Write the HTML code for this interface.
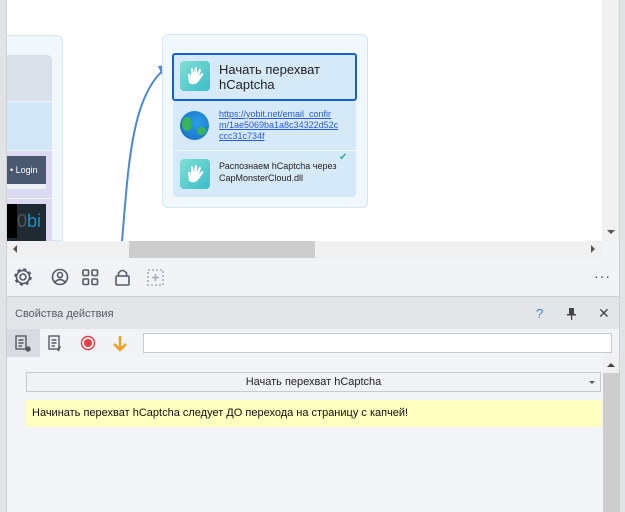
<!DOCTYPE html>
<html><head><meta charset="utf-8"><style>
*{margin:0;padding:0;box-sizing:border-box}
body{width:625px;height:512px;overflow:hidden;position:relative;background:#f2f3f7;font-family:"Liberation Sans","DejaVu Sans",sans-serif}
.a{position:absolute}
.hand{position:absolute;width:30px;height:30px;border-radius:4px;background:linear-gradient(135deg,#7fe0d6,#3cbcc8)}
</style></head><body>
<div class="a" style="left:0;top:0;width:7px;height:512px;background:#e2e3e7;border-right:1px solid #cfd0d4"></div>
<div class="a" style="left:7px;top:0;width:595px;height:241px;background:#fff"></div>
<!-- left node -->
<div class="a" style="left:7px;top:35px;width:56px;height:206px;background:#f0f7fd;border:1px solid #d5e6f5;border-left:none;border-radius:0 6px 0 0"></div>
<div class="a" style="left:7px;top:55px;width:45px;height:46px;background:#d9e0ea;border-radius:0 5px 0 0"></div>
<div class="a" style="left:7px;top:102px;width:45px;height:48px;background:#d2e8f8"></div>
<div class="a" style="left:7px;top:151px;width:45px;height:47px;background:#dcdaf2"></div>
<div class="a" style="left:7px;top:156px;width:39px;height:28px;background:#4a5870;color:#fff;font-size:9px;line-height:28px;padding-left:3px">• Login</div>
<div class="a" style="left:7px;top:184px;width:39px;height:5px;background:#eef0f4"></div>
<div class="a" style="left:7px;top:199px;width:45px;height:42px;background:#dcdaf2"></div>
<div class="a" style="left:7px;top:204px;width:39px;height:37px;background:#1f2a33;color:#1a8fc0;font-size:18px;line-height:34px"><span style="display:inline-block;width:10px;height:34px;background:#000;vertical-align:top"></span><span style="color:#555">0</span>bi</div>
<!-- arrow -->
<svg class="a" style="left:100px;top:55px" width="80" height="190"><path d="M22 186 C28 120 30 40 66 13" stroke="#4a88d8" stroke-width="2" fill="none"/><path d="M58 11 L70 10 L62 20 Z" fill="#4a88d8"/><circle cx="72" cy="10" r="3.5" fill="#fff" stroke="#777"/></svg>
<!-- right node -->
<div class="a" style="left:162px;top:34px;width:206px;height:174px;background:#f0f7fd;border:1px solid #d5e6f5;border-radius:6px"></div>
<div class="a" style="left:173px;top:101px;width:183px;height:96px;background:#d6e9f8;border-radius:0 0 4px 4px"></div>
<div class="a" style="left:173px;top:150px;width:183px;height:1px;background:#eef6fc"></div>
<div class="a" style="left:172px;top:53px;width:185px;height:48px;background:#d6e9f8;border:2px solid #1a5fd0;border-radius:3px"></div>
<div class="hand" style="left:180px;top:61px"><svg width="30" height="30"><path d="M9 22 L8 14 Q8 12 10 13 L11 16 L11 8 Q12 6 13 8 L14 13 L15 7 Q16 5 17 7 L17 13 L19 8 Q20 7 21 9 L19 15 L22 12 Q24 12 23 14 L18 21 Q14 25 9 22Z" fill="#fff"/></svg></div>
<div class="a" style="left:219px;top:62px;font-size:13px;line-height:15px;color:#222">Начать перехват<br>hCaptcha</div>
<div class="a" style="left:180px;top:111px;width:29px;height:29px;border-radius:50%;background:radial-gradient(circle at 60% 40%,#2aa0e8,#1565c0);overflow:hidden"><div class="a" style="left:2px;top:6px;width:10px;height:14px;background:#3bb35a;border-radius:50%"></div><div class="a" style="left:17px;top:16px;width:9px;height:8px;background:#3bb35a;border-radius:50%"></div></div>
<div class="a" style="left:219px;top:109px;font-size:9px;line-height:11px;color:#2a5bd7;text-decoration:underline">https://yobit.net/email_confir<br>m/1ae5069ba1a8c34322d52c<br>ccc31c734f</div>
<div class="hand" style="left:180px;top:159px"><svg width="30" height="30"><path d="M9 22 L8 14 Q8 12 10 13 L11 16 L11 8 Q12 6 13 8 L14 13 L15 7 Q16 5 17 7 L17 13 L19 8 Q20 7 21 9 L19 15 L22 12 Q24 12 23 14 L18 21 Q14 25 9 22Z" fill="#fff"/></svg></div>
<div class="a" style="left:219px;top:160px;font-size:9px;line-height:12px;color:#222">Распознаем hCaptcha через<br>CapMonsterCloud.dll</div>
<div class="a" style="left:339px;top:152px;color:#2bb58a;font-size:10px">✔</div>
<!-- scrollbars -->
<div class="a" style="left:602px;top:0;width:17px;height:241px;background:#f0f0f0"></div>
<div class="a" style="left:607px;top:230px;width:0;height:0;border-left:4px solid transparent;border-right:4px solid transparent;border-top:4px solid #555"></div>
<div class="a" style="left:619px;top:0;width:6px;height:512px;background:#e2e3e7;border-left:1px solid #cfd0d4"></div>
<div class="a" style="left:7px;top:241px;width:595px;height:17px;background:#f0f0f0"></div>
<div class="a" style="left:129px;top:241px;width:186px;height:17px;background:#cdcdcd"></div>
<div class="a" style="left:13px;top:245px;border-top:4px solid transparent;border-bottom:4px solid transparent;border-right:4px solid #555"></div>
<div class="a" style="left:591px;top:245px;border-top:4px solid transparent;border-bottom:4px solid transparent;border-left:4px solid #555"></div>
<!-- toolbar -->
<svg class="a" style="left:14px;top:266px" width="160" height="22" fill="none" stroke="#555b66" stroke-width="1.6">
<circle cx="9" cy="11" r="3"/><circle cx="9" cy="11" r="6.5"/><circle cx="9" cy="11" r="7.5" stroke-width="2.5" stroke-dasharray="3 2.9"/>
<circle cx="46" cy="11" r="7.5"/><circle cx="46" cy="9" r="2.5"/><path d="M41 16 Q46 11 51 16"/>
<rect x="69" y="4" width="5.5" height="5.5" rx="1"/><rect x="78" y="4" width="5.5" height="5.5" rx="1"/><rect x="69" y="13" width="5.5" height="5.5" rx="1"/><rect x="78" y="13" width="5.5" height="5.5" rx="1"/>
<rect x="102" y="10" width="13" height="9" rx="1"/><path d="M104.5 10 V7 Q108.5 2 112.5 7 V10"/>
<rect x="134" y="4" width="15" height="15" stroke="#aab" stroke-dasharray="2 2"/><path d="M141.5 8 V15 M138 11.5 H145" stroke="#aab"/>
</svg>
<div class="a" style="left:594px;top:268px;font-size:14px;color:#444;letter-spacing:1px">···</div>
<div class="a" style="left:7px;top:296px;width:612px;height:4px;background:#e2e3e7;border-top:1px solid #cfd0d4"></div>
<!-- panel -->
<div class="a" style="left:7px;top:300px;width:612px;height:29px;background:#e4e5e9"></div>
<div class="a" style="left:15px;top:308px;font-size:11px;color:#555a66">Свойства действия</div>
<div class="a" style="left:536px;top:306px;font-size:13px;color:#3a7be0">?</div>
<svg class="a" style="left:567px;top:308px" width="10" height="12" fill="#444"><rect x="2" y="0" width="5" height="7"/><rect x="0" y="6" width="9" height="1.5"/><rect x="4" y="7" width="1.2" height="5"/></svg>
<div class="a" style="left:598px;top:305px;font-size:14px;color:#444">✕</div>
<div class="a" style="left:7px;top:329px;width:612px;height:28px;background:#f2f3f7"></div>
<div class="a" style="left:7px;top:329px;width:33px;height:28px;background:#d9dbe0"></div>
<svg class="a" style="left:14px;top:334px" width="120" height="20" fill="none" stroke="#555b66" stroke-width="1.4">
<rect x="2" y="2" width="10" height="13"/><path d="M4.5 6H9.5M4.5 9H9.5M4.5 12H8"/><circle cx="14" cy="15" r="2" fill="#555b66"/>
<rect x="35" y="2" width="10" height="13"/><path d="M37.5 6H42.5M37.5 9H42.5M37.5 12H41"/><path d="M46 12 L44 17" stroke-width="2"/>
<circle cx="74" cy="9" r="6.5" stroke="#e84040"/><circle cx="74" cy="9" r="4" fill="#e84040" stroke="none"/>
<path d="M106 2V15M100 10L106 16L112 10" stroke="#f0a020" stroke-width="2.4"/>
</svg>
<div class="a" style="left:143px;top:333px;width:469px;height:20px;background:#fff;border:1px solid #c8cad0"></div>
<div class="a" style="left:7px;top:357px;width:596px;height:155px;background:#f3f4f8"></div>
<div class="a" style="left:603px;top:357px;width:16px;height:155px;background:#f0f0f0"></div>
<div class="a" style="left:603px;top:373px;width:16px;height:139px;background:#cdcdcd"></div>
<div class="a" style="left:607px;top:363px;border-left:4px solid transparent;border-right:4px solid transparent;border-bottom:4px solid #444"></div>
<div class="a" style="left:26px;top:372px;width:575px;height:20px;background:#f1f2f6;border:1px solid #c8cad0;font-size:11px;line-height:18px;text-align:center;color:#222">Начать перехват hCaptcha</div>
<div class="a" style="left:589px;top:381px;border-left:3px solid transparent;border-right:3px solid transparent;border-top:3px solid #555"></div>
<div class="a" style="left:26px;top:400px;width:575px;height:27px;background:#ffffc0;font-size:11px;line-height:27px;padding-left:6px;color:#111">Начинать перехват hCaptcha следует ДО перехода на страницу с капчей!</div>
</body></html>
